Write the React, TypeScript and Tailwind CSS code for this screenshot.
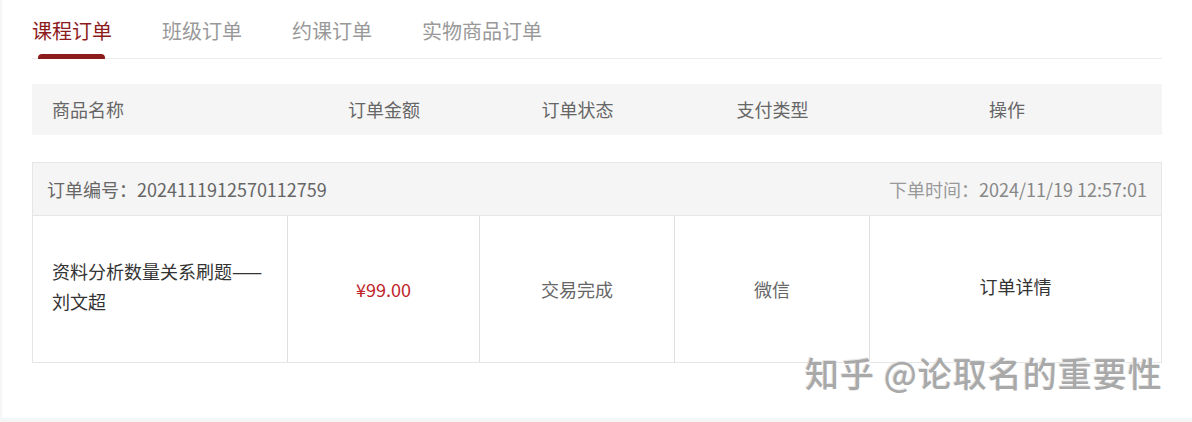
import React from "react";

const font = { fontFamily: '"Noto Sans CJK SC", "Noto Sans", sans-serif' };

export default function App() {
  const tabs = ["课程订单", "班级订单", "约课订单", "实物商品订单"];
  return (
    <div className="w-[1192px] h-[422px] bg-[#f5f6f8] overflow-hidden" style={font}>
      <div className="relative ml-[2px] h-[418px] bg-white pt-[17px] pl-[30px] pr-[28px]">
        {/* Tabs */}
        <div className="flex gap-[50px] border-b border-[#ececec] h-[42px] mr-[2px]">
          {tabs.map((t, i) => (
            <div key={t} className="relative flex flex-col items-start">
              <span
                className={`text-[20px] leading-[28px] ${i === 0 ? "text-[#8c1c1c]" : "text-[#999999]"}`}
              >
                {t}
              </span>
              {i === 0 && (
                <div className="absolute left-[6px] top-[37px] w-[67px] h-[5px] bg-[#8c1c1c] rounded-t-[4px]" />
              )}
            </div>
          ))}
        </div>

        {/* Table header */}
        <div className="mt-[25px] mr-[2px] h-[51px] bg-[#f5f5f5] grid grid-cols-[256px_192px_195px_195px_1fr] items-center text-[18px] text-[#666666]">
          <div className="pl-[20px]">商品名称</div>
          <div className="text-center">订单金额</div>
          <div className="text-center">订单状态</div>
          <div className="text-center">支付类型</div>
          <div className="text-center pr-[18px]">操作</div>
        </div>

        {/* Order block */}
        <div className="mt-[27px] mr-[2px] border border-[#e6e6e6]">
          <div className="h-[53px] bg-[#f5f5f5] border-b border-[#e6e6e6] flex items-center justify-between pl-[14px] pr-[14px] text-[18px] text-[#666666]">
            <span>订单编号：2024111912570112759</span>
            <span className="text-[#999999]">
              下单时间：<span className="text-[#888888]">2024/11/19 12:57:01</span>
            </span>
          </div>
          <div className="h-[146px] grid grid-cols-[255px_192px_195px_195px_1fr]">
            <div className="border-r border-[#e0e0e0] flex items-center pl-[19px] pr-[12px] pb-[6px] text-[18px] leading-[30px] text-[#333333]">
              <span>资料分析数量关系刷题——<br />刘文超</span>
            </div>
            <div className="border-r border-[#e0e0e0] flex items-center justify-center text-[18px] text-[#c0242b]">
              ¥99.00
            </div>
            <div className="border-r border-[#e0e0e0] flex items-center justify-center text-[18px] text-[#666666]">
              交易完成
            </div>
            <div className="border-r border-[#e0e0e0] flex items-center justify-center text-[18px] text-[#666666]">
              微信
            </div>
            <div className="flex items-center justify-center pb-[6px] text-[18px] text-[#333333]">
              订单详情
            </div>
          </div>
        </div>

        {/* Watermark */}
        <div
          className="absolute left-[803px] top-[351px] text-[34px] font-medium tracking-[1px] text-[#a9a9a9] whitespace-nowrap leading-[44px]"
          style={{ textShadow: "1px 1px 0 #ffffff, -1px -1px 0 #e5e5e5" }}
        >
          知乎 @论取名的重要性
        </div>
      </div>
    </div>
  );
}
